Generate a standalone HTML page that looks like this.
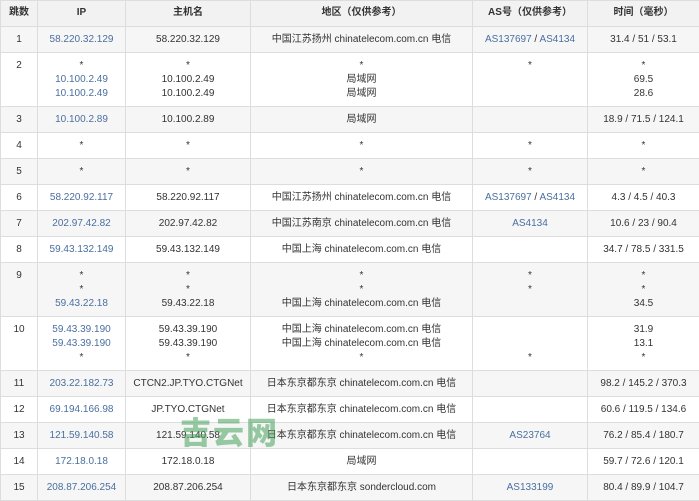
<!DOCTYPE html>
<html><head><meta charset="utf-8"><style>
body{margin:0;background:#fff;width:699px;height:500px;overflow:hidden;position:relative}
table{border-collapse:collapse;font-family:"Liberation Sans","Noto Sans CJK SC",sans-serif;font-size:10px;color:#333;position:absolute;left:0;top:0;width:699px;table-layout:fixed}
td,th{border:1px solid #ddd;text-align:center;vertical-align:top;padding:6px 2px 5px;line-height:14px;white-space:nowrap;overflow:hidden}
th{background:#f2f2f2;font-weight:bold;height:14px;padding:5px 2px 6px}
tr.o td{background:#f6f6f6}
a{color:#4a6fa0;text-decoration:none}
.wm{position:absolute;left:180px;top:408px;font-family:"Noto Sans CJK SC",sans-serif;font-weight:900;font-size:31px;color:rgba(70,160,90,0.55);letter-spacing:2px}
</style></head><body>
<table>
<colgroup><col style="width:37px"><col style="width:88px"><col style="width:125px"><col style="width:222px"><col style="width:115px"><col style="width:112px"></colgroup>
<tr><th>跳数</th><th>IP</th><th>主机名</th><th>地区（仅供参考）</th><th>AS号（仅供参考）</th><th>时间（毫秒）</th></tr>
<tr class="o"><td>1</td><td><a>58.220.32.129</a></td><td>58.220.32.129</td><td>中国江苏扬州 chinatelecom.com.cn 电信</td><td><a>AS137697</a> / <a>AS4134</a></td><td>31.4 / 51 / 53.1</td></tr>
<tr><td>2</td><td>*<br><a>10.100.2.49</a><br><a>10.100.2.49</a></td><td>*<br>10.100.2.49<br>10.100.2.49</td><td>*<br>局域网<br>局域网</td><td>*</td><td>*<br>69.5<br>28.6</td></tr>
<tr class="o"><td>3</td><td><a>10.100.2.89</a></td><td>10.100.2.89</td><td>局域网</td><td></td><td>18.9 / 71.5 / 124.1</td></tr>
<tr><td>4</td><td>*</td><td>*</td><td>*</td><td>*</td><td>*</td></tr>
<tr class="o"><td>5</td><td>*</td><td>*</td><td>*</td><td>*</td><td>*</td></tr>
<tr><td>6</td><td><a>58.220.92.117</a></td><td>58.220.92.117</td><td>中国江苏扬州 chinatelecom.com.cn 电信</td><td><a>AS137697</a> / <a>AS4134</a></td><td>4.3 / 4.5 / 40.3</td></tr>
<tr class="o"><td>7</td><td><a>202.97.42.82</a></td><td>202.97.42.82</td><td>中国江苏南京 chinatelecom.com.cn 电信</td><td><a>AS4134</a></td><td>10.6 / 23 / 90.4</td></tr>
<tr><td>8</td><td><a>59.43.132.149</a></td><td>59.43.132.149</td><td>中国上海 chinatelecom.com.cn 电信</td><td></td><td>34.7 / 78.5 / 331.5</td></tr>
<tr class="o"><td>9</td><td>*<br>*<br><a>59.43.22.18</a></td><td>*<br>*<br>59.43.22.18</td><td>*<br>*<br>中国上海 chinatelecom.com.cn 电信</td><td>*<br>*<br>&nbsp;</td><td>*<br>*<br>34.5</td></tr>
<tr><td>10</td><td><a>59.43.39.190</a><br><a>59.43.39.190</a><br>*</td><td>59.43.39.190<br>59.43.39.190<br>*</td><td>中国上海 chinatelecom.com.cn 电信<br>中国上海 chinatelecom.com.cn 电信<br>*</td><td>&nbsp;<br>&nbsp;<br>*</td><td>31.9<br>13.1<br>*</td></tr>
<tr class="o"><td>11</td><td><a>203.22.182.73</a></td><td>CTCN2.JP.TYO.CTGNet</td><td>日本东京都东京 chinatelecom.com.cn 电信</td><td></td><td>98.2 / 145.2 / 370.3</td></tr>
<tr><td>12</td><td><a>69.194.166.98</a></td><td>JP.TYO.CTGNet</td><td>日本东京都东京 chinatelecom.com.cn 电信</td><td></td><td>60.6 / 119.5 / 134.6</td></tr>
<tr class="o"><td>13</td><td><a>121.59.140.58</a></td><td>121.59.140.58</td><td>日本东京都东京 chinatelecom.com.cn 电信</td><td><a>AS23764</a></td><td>76.2 / 85.4 / 180.7</td></tr>
<tr><td>14</td><td><a>172.18.0.18</a></td><td>172.18.0.18</td><td>局域网</td><td></td><td>59.7 / 72.6 / 120.1</td></tr>
<tr class="o"><td>15</td><td><a>208.87.206.254</a></td><td>208.87.206.254</td><td>日本东京都东京 sondercloud.com</td><td><a>AS133199</a></td><td>80.4 / 89.9 / 104.7</td></tr>
</table>
<div class="wm">吉云网</div>
</body></html>
